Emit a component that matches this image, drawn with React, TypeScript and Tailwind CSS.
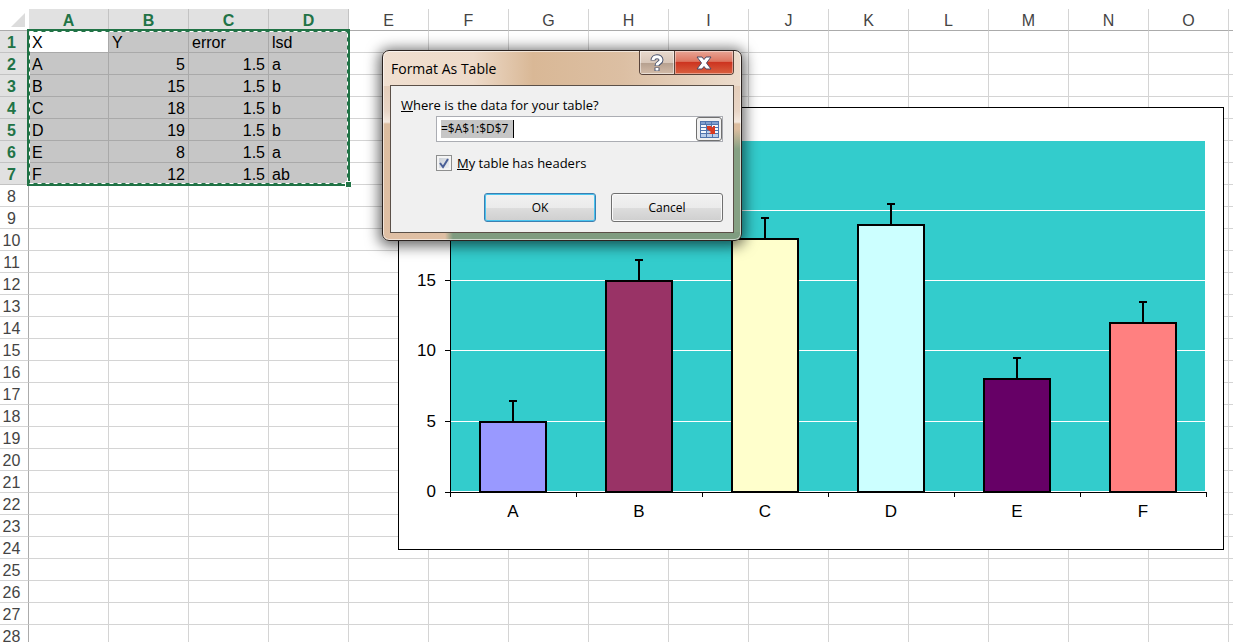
import React from "react";

const COLUMNS = ["A", "B", "C", "D", "E", "F", "G", "H", "I", "J", "K", "L", "M", "N", "O"];
const ROW_COUNT = 28;

const DATA: (string | number)[][] = [
  ["X", "Y", "error", "lsd"],
  ["A", 5, 1.5, "a"],
  ["B", 15, 1.5, "b"],
  ["C", 18, 1.5, "b"],
  ["D", 19, 1.5, "b"],
  ["E", 8, 1.5, "a"],
  ["F", 12, 1.5, "ab"],
];

const BARS = [
  { label: "A", value: 5, color: "#9999ff" },
  { label: "B", value: 15, color: "#993366" },
  { label: "C", value: 18, color: "#ffffcc" },
  { label: "D", value: 19, color: "#ccffff" },
  { label: "E", value: 8, color: "#660066" },
  { label: "F", value: 12, color: "#ff8080" },
];

function cellClass(row: number, col: number) {
  const base = "h-[22px] overflow-hidden border-r border-b px-[3px] pt-[2px] pb-0 whitespace-nowrap leading-[19px]";
  if (row >= 7 || col >= 4) return `${base} border-[#d4d4d4]`;
  const fill = row === 0 && col === 0 ? "bg-white" : "bg-[#c6c6c6]";
  const align = typeof DATA[row][col] === "number" ? "text-right" : "text-left";
  return `${base} border-[#a9a9a9] ${fill} ${align}`;
}

function Sheet() {
  return (
    <table className="w-full table-fixed border-separate border-spacing-0 text-[16px] text-black">
      <colgroup>
        <col className="w-[29px]" />
        {COLUMNS.map((c) => (
          <col key={c} className="w-[80px]" />
        ))}
        <col />
      </colgroup>
      <thead>
        <tr>
          <td className="h-[22px] border-b border-[#ababab] p-0">
            <svg className="ml-auto mr-1 block" width="14" height="14" viewBox="0 0 14 14" aria-hidden="true">
              <path d="M14 0V14H0Z" fill="#dcdcdc" />
            </svg>
          </td>
          {COLUMNS.map((c, i) => (
            <th
              key={c}
              scope="col"
              className={
                i < 4
                  ? "h-[22px] border-r border-b border-[#c3c3c3] bg-[#e1e1e1] px-0 pt-[2px] pb-0 leading-[19px] font-bold text-[#217346]"
                  : "h-[22px] border-r border-b border-r-[#d4d4d4] border-b-[#ababab] px-0 pt-[2px] pb-0 leading-[19px] font-normal text-[#444]"
              }
            >
              {c}
            </th>
          ))}
          <td className="border-b border-[#ababab] p-0" />
        </tr>
      </thead>
      <tbody>
        {Array.from({ length: ROW_COUNT }, (_, r) => (
          <tr key={r}>
            <th
              scope="row"
              className={
                r < 7
                  ? "h-[22px] border-r border-b border-r-[#217346] border-b-[#c3c3c3] bg-[#e1e1e1] pt-[2px] pr-[5px] pb-0 pl-0 text-center leading-[19px] font-bold text-[#217346]"
                  : "h-[22px] border-r border-b border-r-[#ababab] border-b-[#d4d4d4] pt-[2px] pr-[5px] pb-0 pl-0 text-center leading-[19px] font-normal text-[#444]"
              }
            >
              {r + 1}
            </th>
            {COLUMNS.map((c, i) => (
              <td key={c} className={cellClass(r, i)}>
                {r < 7 && i < 4 ? DATA[r][i] : null}
              </td>
            ))}
            <td className="border-b border-[#d4d4d4] p-0" />
          </tr>
        ))}
      </tbody>
    </table>
  );
}

function SelectionOutline() {
  return (
    <svg className="pointer-events-none absolute top-[29px] left-[27px]" width="325" height="159" viewBox="0 0 325 159" aria-hidden="true">
      <rect x="1.5" y="1.5" width="320" height="154" fill="none" stroke="#217346" strokeWidth="3" />
      <rect x="2.5" y="2.5" width="318" height="152" fill="none" stroke="#fff" strokeWidth="1" strokeDasharray="4 4" />
      <path d="M318.500 152.500h6v6h-6z" fill="#217346" stroke="#fff" strokeWidth="1" />
    </svg>
  );
}

const BASE_Y = 385;
const UNIT = 14.07;
const yOf = (v: number) => Math.round(BASE_Y - v * UNIT);

function Chart() {
  return (
    <svg
      className="absolute top-[107px] left-[398px] font-['Liberation_Sans',Arial,sans-serif]"
      width="826"
      height="443"
      viewBox="0 0 826 443"
      role="img"
      aria-label="Bar chart of Y by X"
    >
      <rect x="0.5" y="0.5" width="825" height="442" fill="#fff" stroke="#000" />
      <rect x="52" y="34" width="755" height="350" fill="#33cccc" />
      {[5, 10, 15, 20].map((v) => (
        <path key={v} d={`M53 ${yOf(v) - 0.5}H807`} stroke="#fff" />
      ))}
      <path d="M52.5 34V390" stroke="#000" fill="none" />
      <path d="M47 385.5H809" stroke="#000" />
      {[0, 5, 10, 15, 20, 25].map((v) => (
        <g key={v}>
          <path d={`M47 ${v === 0 ? 385.5 : yOf(v) - 0.5}H53`} stroke="#000" />
          <text x="38" y={yOf(v) + 5} textAnchor="end" fontSize="17">
            {v}
          </text>
        </g>
      ))}
      {BARS.map((b, i) => {
        const cx = 115 + i * 126;
        const top = yOf(b.value);
        const cap = yOf(b.value + 1.5);
        return (
          <g key={b.label}>
            <path d={`M${cx + 63.5} 385V390`} stroke="#000" />
            <rect x={cx - 33} y={top} width="66" height={385 - top} fill={b.color} stroke="#000" strokeWidth="2" />
            <path d={`M${cx} ${top}V${cap}M${cx - 4} ${cap}H${cx + 4}`} stroke="#000" strokeWidth="2" />
            <text x={cx} y="410" textAnchor="middle" fontSize="17">
              {b.label}
            </text>
          </g>
        );
      })}
    </svg>
  );
}

function RangeIcon() {
  return (
    <svg width="19" height="17" viewBox="0 0 19 17" aria-hidden="true">
      <rect width="19" height="17" fill="#4f74ad" />
      <path d="M1 1h4v2H1zM6 1h5v2H6zM12 1h6v2h-6z" fill="#7f9fd0" />
      <path d="M1 4h5v2H1zM12 4h6v2h-6zM1 7h5v2H1zM14 7h4v2h-4zM1 10h5v2H1zM14 10h4v2h-4z" fill="#f3f7fd" />
      <path d="M7 4h4v2H7zM7 10h4v2H7zM1 13h5v3H1zM7 13h5v3H7zM13 13h5v3h-5z" fill="#b9cdea" />
      <path d="M7 5h4l2 2V5h2v8H9l2-2-4-3z" fill="#d83a22" />
    </svg>
  );
}

function FormatDialog() {
  return (
    <section
      role="dialog"
      aria-labelledby="dialog-title"
      className="absolute top-[50px] left-[382px] w-[360px] rounded-[7px] border border-[#2b2320] bg-[linear-gradient(90deg,transparent_62px,#7f9c80_70px),linear-gradient(180deg,transparent_78px,#86a184_98px),linear-gradient(90deg,#f0dfd0_0px,#eddac9_90px,#d9b896_150px,#dcbfa3_240px,#ecdccd_358px),linear-gradient(180deg,#e0c3a9_0px,#e8d5c6_60px,#f4e9df_71px,#dcbd9f_73px,#dfbfa4_100%)] bg-[length:100%_8px,8px_100%,100%_35px,100%_100%] bg-[position:left_bottom,right_top,left_top,left_top] bg-no-repeat px-[7px] pb-[7px] font-['Open_Sans','Noto_Sans',sans-serif] text-[12px] text-black shadow-[0_2px_14px_3px_rgba(0,0,0,0.6),inset_0_0_0_1px_rgba(255,255,255,0.6)]"
    >
      <header className="flex h-[34px] items-start justify-between">
        <h1 id="dialog-title" className="pt-[8px] pl-px text-[14px] leading-[20px]">
          Format As Table
        </h1>
        <div className="flex h-[24px] overflow-hidden rounded-b-[4px] border border-t-0 border-[#58433a]">
          <button aria-label="Help" className="flex w-[35px] items-center justify-center border-r border-[#58433a] bg-[linear-gradient(#e8d9cd,#d8c6b8_50%,#b59f8e_51%,#d3bba8)] shadow-[inset_0_0_0_1px_rgba(255,255,255,0.5)]">
            <svg width="14" height="18" viewBox="0 0 14 18" aria-hidden="true">
              <path d="M3 6.500C3 1.500 11 1.500 11 6C11 9 7 8.500 7 12M7 13.500V17" fill="none" stroke="#4c5670" strokeWidth="5" />
              <path d="M3 6C3 1.500 11 1.500 11 6C11 9 7 8.500 7 11.500M7 14V16.500" fill="none" stroke="#fff" strokeWidth="3" />
            </svg>
          </button>
          <button aria-label="Close" className="flex w-[58px] items-center justify-center bg-[linear-gradient(#e8a595,#dd7560_45%,#cd3420_50%,#d9603f)] shadow-[inset_0_0_0_1px_rgba(255,255,255,0.4)]">
            <svg width="16" height="14" viewBox="0 0 16 14" aria-hidden="true">
              <path d="M1 1H6L8 3.500L10 1H15L10.500 7L15 13H10L8 10.500L6 13H1L5.500 7Z" fill="#fff" stroke="#4a4b66" />
            </svg>
          </button>
        </div>
      </header>
      <form className="border border-[#5b5048] bg-[#f0f0f0] px-[10px] pt-[10px] pb-[10px]" onSubmit={(e) => e.preventDefault()}>
        <label htmlFor="range" className="block text-[13px] leading-[18px]">
          <span className="underline">W</span>here is the data for your table?
        </label>
        <div className="mt-[2px] ml-[35px] flex h-[26px] items-center border border-[#abadb3] bg-white pl-1">
          <input id="range" defaultValue="=$A$1:$D$7" className="w-[73px] border-r border-black bg-[#c6c6c6] text-[12px] leading-[18px] outline-none" />
          <button type="button" aria-label="Select range" className="ml-auto flex h-[24px] w-[26px] items-center justify-center rounded-[3px] border border-[#707070] bg-[#f0f0f0]">
            <RangeIcon />
          </button>
        </div>
        <label className="mt-[12px] ml-[35px] flex items-center gap-[5px] text-[13px] leading-[18px]">
          <span className="grid">
            <input
              type="checkbox"
              defaultChecked
              className="peer col-start-1 row-start-1 size-[16px] appearance-none border border-[#8e8f8f] bg-[linear-gradient(135deg,#c5cbd3,#f3f4f6)] shadow-[inset_0_0_0_2px_#f4f4f4]"
            />
            <svg className="pointer-events-none invisible col-start-1 row-start-1 peer-checked:visible" width="16" height="16" viewBox="0 0 16 16" aria-hidden="true">
              <path d="M4 8L7 12L12 4" fill="none" stroke="#4a5f97" strokeWidth="2" />
            </svg>
          </span>
          <span>
            <span className="underline">M</span>y table has headers
          </span>
        </label>
        <div className="mt-[21px] flex justify-end gap-[15px]">
          <button className="h-[29px] w-[112px] rounded-[3px] border border-[#3c7fb1] bg-[linear-gradient(#f2f2f2,#ebebeb_50%,#dddddd_51%,#cfcfcf)] shadow-[inset_0_0_0_1px_#48c4ef]">OK</button>
          <button type="button" className="h-[29px] w-[112px] rounded-[3px] border border-[#707070] bg-[linear-gradient(#f2f2f2,#ebebeb_50%,#dddddd_51%,#cfcfcf)] shadow-[inset_0_0_0_1px_#fafafa]">
            Cancel
          </button>
        </div>
      </form>
    </section>
  );
}

export default function App() {
  return (
    <main className="relative h-screen overflow-hidden bg-white pt-[9px] font-['Liberation_Sans',Arial,sans-serif]">
      <Sheet />
      <SelectionOutline />
      <Chart />
      <FormatDialog />
    </main>
  );
}
